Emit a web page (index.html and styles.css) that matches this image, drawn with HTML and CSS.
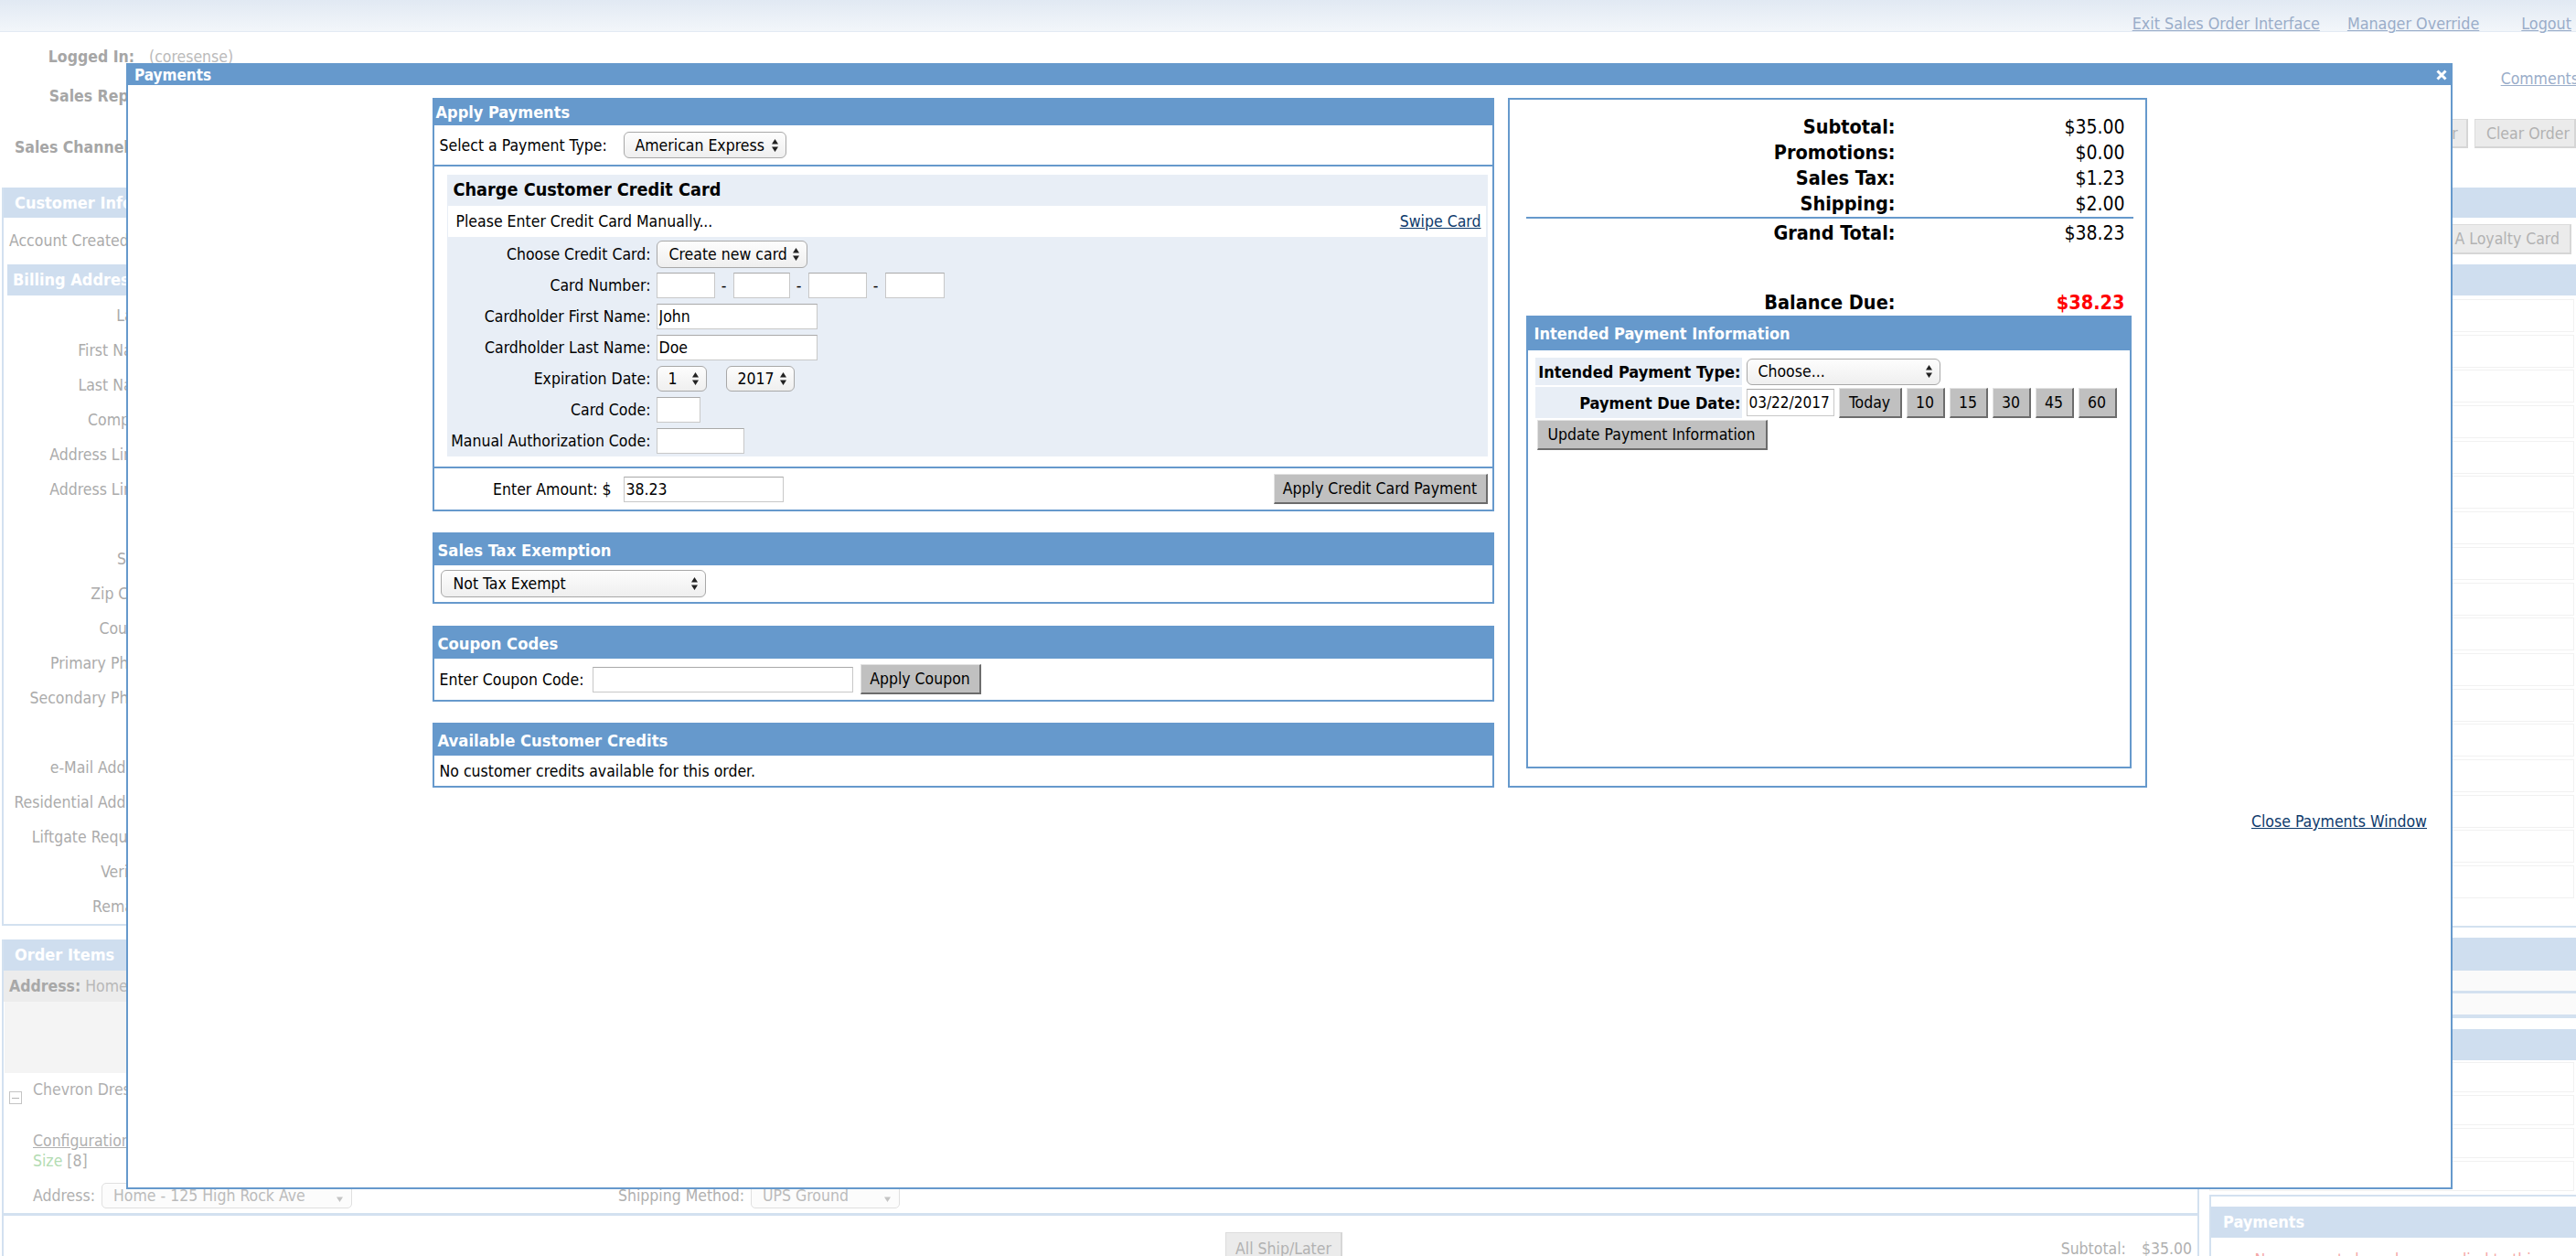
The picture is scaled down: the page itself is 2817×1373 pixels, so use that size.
FILE: index.html
```html
<!DOCTYPE html>
<html lang="en">
<head>
<meta charset="utf-8">
<title>Sales Order - Payments</title>
<link rel="stylesheet" href="styles.css">
</head>
<body>
<div class="page">
  <header class="topbar">
    <nav class="toplinks">
      <a class="toplink">Exit Sales Order Interface</a>
      <a class="toplink mgr">Manager Override</a>
      <a class="toplink logout">Logout</a>
    </nav>
  </header>

  <div class="layout">
    <main class="main">
      <div class="hdr-row logged"><span class="hdr-label">Logged In:</span><span class="hdr-val">(coresense)</span></div>
      <div class="hdr-row rep"><span class="hdr-label">Sales Rep:</span></div>
      <div class="hdr-row chan"><span class="hdr-label">Sales Channel:</span></div>

      <section class="bg-panel cust">
        <div class="bg-band">Customer Information</div>
        <div class="acct">Account Created:</div>
        <div class="bg-band sub">Billing Address</div>
        <div class="fields">
          <div class="field">Label:</div>
          <div class="field">First Name:</div>
          <div class="field">Last Name:</div>
          <div class="field">Company:</div>
          <div class="field">Address Line 1:</div>
          <div class="field">Address Line 2:</div>
          <div class="field">City:</div>
          <div class="field">State:</div>
          <div class="field">Zip Code:</div>
          <div class="field">Country:</div>
          <div class="field">Primary Phone:</div>
          <div class="field">Secondary Phone:</div>
          <div class="field">Fax:</div>
          <div class="field">e-Mail Address:</div>
          <div class="field">Residential Address:</div>
          <div class="field">Liftgate Required:</div>
          <div class="field">Verified:</div>
          <div class="field">Remarks:</div>
        </div>
      </section>

      <section class="bg-panel items">
        <div class="bg-band tall">Order Items</div>
        <div class="addr-bar"><b>Address:</b> Home - 125 High Rock Ave</div>
        <div class="gray-area"></div>
        <div class="item">
          <span class="minus"></span>
          <div class="item-text">
            <div class="item-name">Chevron Dress</div>
            <a class="config">Configuration</a>
            <div class="size"><span class="size-l">Size</span> [8]</div>
          </div>
        </div>
        <div class="addr-row">
          <span class="addr-label">Address:</span>
          <span class="bg-select addr-sel">Home - 125 High Rock Ave<svg class="arr" width="9" height="16" viewBox="0 0 9 16"><path d="M1 9.5H8L4.5 15z" fill="#c4c4c4"/></svg></span>
          <span class="ship-label">Shipping Method:</span>
          <span class="bg-select ship-sel">UPS Ground<svg class="arr" width="9" height="16" viewBox="0 0 9 16"><path d="M1 9.5H8L4.5 15z" fill="#c4c4c4"/></svg></span>
        </div>
        <div class="items-line"></div>
        <div class="totals">
          <span class="bg-btn ship-later">All Ship/Later</span>
          <span class="sub-total"><span>Subtotal:</span><span>$35.00</span></span>
        </div>
      </section>
    </main>

    <aside class="side">
      <div class="s-comments"><a>Comments</a></div>
      <div class="s-btns"><span class="bg-btn save">Save Order</span><span class="bg-btn clear">Clear Order</span></div>
      <div class="s-band first"></div>
      <div class="s-loyal"><span class="bg-btn loyal">Add A Loyalty Card</span></div>
      <div class="s-band mid"></div>
      <div class="s-rows">
        <div class="s-row"></div><div class="s-row"></div><div class="s-row"></div><div class="s-row"></div>
        <div class="s-row"></div><div class="s-row"></div><div class="s-row"></div><div class="s-row"></div>
        <div class="s-row"></div><div class="s-row"></div><div class="s-row"></div><div class="s-row"></div>
        <div class="s-row"></div><div class="s-row"></div><div class="s-row"></div><div class="s-row"></div>
        <div class="s-row"></div>
      </div>
      <div class="s-line"></div>
      <div class="s-band b3"></div>
      <div class="s-sub"></div>
      <div class="s-sep3"></div>
      <div class="s-sub b"></div>
      <div class="s-sep4"></div>
      <div class="s-band b4"></div>
      <div class="s-rows2">
        <div class="s-row2"></div><div class="s-row2"></div><div class="s-row2"></div><div class="s-row2"></div>
      </div>
      <div class="s-pay">
        <div class="s-pay-band">Payments</div>
        <div class="s-warn"><svg width="16" height="15" viewBox="0 0 16 15"><path d="M8 1L15 14H1z" fill="#f3d9b0"/></svg><span>No payments have been applied to this order.</span></div>
      </div>
    </aside>
  </div>

  <div class="modal">
    <div class="modal-title">
      <span class="modal-name">Payments</span>
      <svg class="close" width="12" height="12" viewBox="0 0 12 12"><path d="M1.5 1.5L10.5 10.5M10.5 1.5L1.5 10.5" stroke="#fff" stroke-width="3"/></svg>
    </div>
    <div class="modal-body">
      <div class="pay-grid">
        <div class="col-left">
          <section class="panel apply">
            <h2 class="panel-head short">Apply Payments</h2>
            <div class="pt-row">
              <span class="pt-label">Select a Payment Type:</span>
              <span class="sel sel-pt">American Express<svg class="arr" width="9" height="16" viewBox="0 0 9 16"><path d="M4.5 1L8 6.5H1z M1 9.5H8L4.5 15z" fill="#222"/></svg></span>
            </div>
            <div class="cc-wrap">
              <div class="cc-box">
                <div class="cc-title">Charge Customer Credit Card</div>
                <div class="cc-manual"><span>Please Enter Credit Card Manually...</span><a class="link">Swipe Card</a></div>
                <div class="cc-form">
                  <span class="lbl">Choose Credit Card:</span>
                  <div class="cell"><span class="sel sel-card">Create new card<svg class="arr" width="9" height="16" viewBox="0 0 9 16"><path d="M4.5 1L8 6.5H1z M1 9.5H8L4.5 15z" fill="#222"/></svg></span></div>

                  <span class="lbl">Card Number:</span>
                  <div class="cell"><input class="in cn1" type="text"><span class="dash">-</span><input class="in cn2" type="text"><span class="dash">-</span><input class="in cn1" type="text"><span class="dash">-</span><input class="in cn4" type="text"></div>

                  <span class="lbl">Cardholder First Name:</span>
                  <div class="cell"><input class="in name" type="text" value="John"></div>

                  <span class="lbl">Cardholder Last Name:</span>
                  <div class="cell"><input class="in name" type="text" value="Doe"></div>

                  <span class="lbl">Expiration Date:</span>
                  <div class="cell"><span class="sel sel-m">1<svg class="arr" width="9" height="16" viewBox="0 0 9 16"><path d="M4.5 1L8 6.5H1z M1 9.5H8L4.5 15z" fill="#222"/></svg></span><span class="sel sel-y">2017<svg class="arr" width="9" height="16" viewBox="0 0 9 16"><path d="M4.5 1L8 6.5H1z M1 9.5H8L4.5 15z" fill="#222"/></svg></span></div>

                  <span class="lbl">Card Code:</span>
                  <div class="cell"><input class="in code" type="text"></div>

                  <span class="lbl">Manual Authorization Code:</span>
                  <div class="cell"><input class="in auth" type="text"></div>
                </div>
              </div>
            </div>
            <div class="amount-row">
              <span class="amt-label">Enter Amount: $</span>
              <input class="in amt" type="text" value="38.23">
              <button class="btn apply-cc">Apply Credit Card Payment</button>
            </div>
          </section>

          <section class="panel tax">
            <h2 class="panel-head">Sales Tax Exemption</h2>
            <div class="tax-body">
              <span class="sel sel-tax">Not Tax Exempt<svg class="arr" width="9" height="16" viewBox="0 0 9 16"><path d="M4.5 1L8 6.5H1z M1 9.5H8L4.5 15z" fill="#222"/></svg></span>
            </div>
          </section>

          <section class="panel coupon">
            <h2 class="panel-head">Coupon Codes</h2>
            <div class="coupon-body">
              <span class="cp-label">Enter Coupon Code:</span>
              <input class="in cp" type="text">
              <button class="btn apply-cp">Apply Coupon</button>
            </div>
          </section>

          <section class="panel credits">
            <h2 class="panel-head">Available Customer Credits</h2>
            <div class="credits-body">No customer credits available for this order.</div>
          </section>
        </div>

        <div class="col-right">
          <section class="panel summary">
            <div class="sum-table">
              <span class="s-lbl">Subtotal:</span><span class="s-val">$35.00</span>
              <span class="s-lbl">Promotions:</span><span class="s-val">$0.00</span>
              <span class="s-lbl">Sales Tax:</span><span class="s-val">$1.23</span>
              <span class="s-lbl">Shipping:</span><span class="s-val">$2.00</span>
            </div>
            <div class="sum-line"></div>
            <div class="sum-table grand">
              <span class="s-lbl">Grand Total:</span><span class="s-val">$38.23</span>
            </div>
            <div class="sum-table balance">
              <span class="s-lbl">Balance Due:</span><span class="s-val due">$38.23</span>
            </div>
            <div class="intended">
              <h2 class="panel-head int-head">Intended Payment Information</h2>
              <div class="int-grid">
                <span class="int-lbl">Intended Payment Type:</span>
                <div class="int-cell"><span class="sel sel-int">Choose...<svg class="arr" width="9" height="16" viewBox="0 0 9 16"><path d="M4.5 1L8 6.5H1z M1 9.5H8L4.5 15z" fill="#222"/></svg></span></div>
                <span class="int-lbl tall">Payment Due Date:</span>
                <div class="int-cell date-cell">
                  <input class="in date" type="text" value="03/22/2017">
                  <button class="btn today">Today</button>
                  <button class="btn days">10</button>
                  <button class="btn days">15</button>
                  <button class="btn days">30</button>
                  <button class="btn days">45</button>
                  <button class="btn days">60</button>
                </div>
                <button class="btn update">Update Payment Information</button>
              </div>
            </div>
          </section>
        </div>
      </div>
      <div class="close-row"><a class="link">Close Payments Window</a></div>
    </div>
  </div>
</div>
</body>
</html>
```

FILE: styles.css
```css
* { box-sizing: border-box; }
html, body { margin: 0; padding: 0; }
body {
  width: 2817px;
  height: 1373px;
  overflow: hidden;
  background: #fff;
  font-family: "DejaVu Sans Condensed", "DejaVu Sans", sans-serif;
  font-stretch: condensed;
  font-size: 17.5px;
  color: #000;
}
h2 { margin: 0; }
a { cursor: pointer; }
.page { position: relative; width: 2817px; height: 1373px; overflow: hidden; }

/* ---------- background page (faded) ---------- */
.topbar {
  height: 35px;
  background: linear-gradient(#e1e9f3, #f2f6fa);
  border-bottom: 1px solid #e3eaf3;
  display: flex;
  justify-content: flex-end;
  align-items: flex-start;
  padding: 16px 5px 0 0;
}
.toplinks { display: flex; line-height: 20px; font-size: 17.8px; }
.toplink { color: #9aadc9; text-decoration: underline; }
.toplink.mgr { margin-left: 30px; }
.toplink.logout { margin-left: 46px; }

.layout { display: grid; grid-template-columns: 2405px 401px; column-gap: 11px; }
.main { display: flex; flex-direction: column; }

.hdr-row { display: flex; align-items: center; }
.hdr-label { width: 147px; text-align: right; font-weight: bold; color: #a6a6a6; }
.hdr-val { margin-left: 16px; color: #bababa; }
.logged { height: 54px; }
.rep { height: 32px; }
.chan { height: 80px; }

.bg-panel { margin-left: 2px; border-left: 2px solid #d3e1f0; }
.cust { margin-top: 4px; border-bottom: 2px solid #d3e1f0; }
.bg-band {
  background: #cfdeef;
  color: #fff;
  font-weight: bold;
  font-size: 18px;
  height: 33px;
  line-height: 33px;
  padding-left: 12px;
}
.bg-band.sub { margin-left: 4px; height: 34px; line-height: 34px; padding-left: 6px; }
.bg-band.tall { height: 34px; line-height: 34px; }
.acct { height: 51px; line-height: 51px; padding-left: 6px; color: #ababab; }
.fields { margin-top: 3px; }
.field { width: 171px; height: 38px; line-height: 38px; text-align: right; color: #ababab; white-space: nowrap; }

.items { margin-top: 15px; border-right: 2px solid #d3e1f0; flex: 1; }
.addr-bar { height: 34px; line-height: 34px; background: #ececec; padding-left: 6px; color: #b8b8b8; }
.addr-bar b { color: #a8a8a8; }
.gray-area { height: 78px; background: #f4f4f4; margin-left: 1px; }
.item { height: 117px; display: flex; align-items: flex-start; }
.minus {
  width: 14px; height: 14px;
  margin: 20px 12px 0 6px;
  border: 1px solid #c4c4c4;
  display: flex; align-items: center; justify-content: center;
}
.minus::before { content: ""; width: 8px; height: 1px; background: #b5b5b5; }
.item-text { padding-top: 7px; color: #b0b0b0; line-height: 22px; display: flex; flex-direction: column; align-items: flex-start; }
.item-name { margin-bottom: 34px; }
.config { color: #b0b0b0; text-decoration: underline; }
.size-l { color: #b3dcb3; }
.addr-row { height: 34px; display: flex; align-items: center; color: #b0b0b0; }
.addr-label { width: 107px; padding-left: 32px; }
.bg-select {
  display: inline-flex; align-items: center; justify-content: space-between;
  height: 28px; border: 1px solid #e0e0e0; border-radius: 5px;
  padding: 0 8px 0 12px; color: #bbbbbb; background: #fcfcfc;
}
.addr-sel { width: 274px; }
.ship-label { width: 429px; text-align: right; margin-right: 7px; }
.ship-sel { width: 163px; }
.items-line { height: 3px; background: #d3e1f0; margin-top: 2px; }
.totals { display: flex; align-items: flex-start; padding-top: 18px; }
.bg-btn {
  display: inline-flex; align-items: center; justify-content: center;
  background: #ebebeb; border: 1px solid #dcdcdc; border-bottom: 2px solid #d6d6d6; border-right: 2px solid #d6d6d6;
  color: #b2b2b2; white-space: nowrap;
}
.ship-later { margin-left: 1336px; width: 128px; height: 36px; }
.sub-total { margin-left: auto; display: flex; gap: 17px; line-height: 36px; padding-right: 6px; color: #b0b0b0; }

.side { display: flex; flex-direction: column; }
.s-comments { height: 95px; display: flex; align-items: center; justify-content: flex-end; padding-top: 6px; }
.s-comments a { color: #9aadc9; text-decoration: underline; margin-right: -3px; }
.s-btns { height: 32px; display: flex; justify-content: flex-end; gap: 7px; }
.save { width: 110px; }
.clear { width: 111px; justify-content: flex-start; padding-left: 12px; }
.s-band { background: #cfdeef; height: 33px; }
.s-band.first { margin-top: 43px; }
.s-loyal { margin-top: 7px; height: 33px; display: flex; justify-content: flex-end; padding-right: 5px; }
.loyal { padding: 0 11px 0 12px; }
.s-band.mid { margin-top: 11px; height: 34px; }
.s-rows { margin-top: 4px; }
.s-row { height: 36px; margin: 0 2px 2.7px 0; border: 1px solid #f1f1f1; }
.s-line { margin-top: 27px; height: 2px; background: #d3e1f0; }
.s-band.b3 { margin-top: 11px; height: 36px; }
.s-sub { height: 22px; background: #fafafa; }
.s-sub.b { height: 23px; }
.s-sep3 { height: 3px; background: #d3e1f0; }
.s-sep4 { height: 4px; background: #d3e1f0; }
.s-band.b4 { margin-top: 12px; height: 34px; }
.s-rows2 { margin-top: 2px; }
.s-row2 { height: 33px; margin: 0 2px 3px 0; border: 1px solid #f1f1f1; }
.s-pay { margin-top: 1px; border-top: 2px solid #d3e1f0; border-left: 2px solid #d3e1f0; height: 80px; }
.s-pay-band { margin-top: 11px; height: 34px; line-height: 34px; background: #cfdeef; color: #fff; font-weight: bold; font-size: 18px; padding-left: 13px; }
.s-warn { display: flex; align-items: center; gap: 8px; padding: 14px 0 0 24px; color: #f5a8a8; }

/* ---------- modal ---------- */
.modal {
  position: absolute;
  left: 138px;
  top: 69px;
  width: 2544px;
  height: 1231px;
  border: 2px solid #6699cc;
  background: #fff;
}
.modal-title {
  height: 22px;
  background: #6699cc;
  color: #fff;
  display: flex;
  align-items: center;
  justify-content: space-between;
  padding: 0 4px 0 7px;
}
.modal-name { font-weight: bold; font-size: 17px; }
.modal-body { padding-top: 14px; }

.pay-grid {
  display: grid;
  grid-template-columns: 1161px 699px;
  column-gap: 15px;
  justify-content: center;
}
.col-left { display: flex; flex-direction: column; }
.col-right { display: flex; flex-direction: column; }

.panel { border: 2px solid #6699cc; background: #fff; }
.panel-head {
  background: #6699cc;
  color: #fff;
  font-weight: bold;
  font-size: 18.3px;
  height: 34px;
  line-height: 35px;
  padding-left: 4px;
  white-space: nowrap;
}
.panel-head.short { height: 28px; line-height: 28px; padding-left: 2px; font-size: 18px; }

.sel {
  display: inline-flex;
  align-items: center;
  justify-content: space-between;
  height: 29px;
  border: 1px solid #a8a8a8;
  border-radius: 6px;
  background: linear-gradient(#fdfdfd, #efefef);
  padding: 0 7px 0 12px;
  white-space: nowrap;
}
.arr { flex: none; }
.in {
  font: inherit;
  height: 28px;
  border: 1px solid #c8c8c8;
  border-top-color: #a9a9a9;
  padding: 0 2px;
  background: #fff;
  color: #000;
  outline: none;
}
.btn {
  font: inherit;
  color: #000;
  background: #c0c0c0;
  border-top: 1px solid #e2e2e2;
  border-left: 1px solid #e2e2e2;
  border-right: 2px solid #6c6c6c;
  border-bottom: 2px solid #6c6c6c;
  height: 33px;
  padding: 0;
  white-space: nowrap;
}
.link { color: #0d3a6c; text-decoration: underline; }

/* apply payments */
.pt-row { height: 43px; display: flex; align-items: center; }
.pt-label { width: 207px; padding-left: 6px; white-space: nowrap; }
.sel-pt { width: 178px; }
.cc-wrap { border-top: 2px solid #6699cc; padding: 9px 5px 11px 14px; }
.cc-box { background: #e8eef6; }
.cc-title { height: 34px; line-height: 34px; padding-left: 7px; font-weight: bold; font-size: 19.7px; white-space: nowrap; }
.cc-manual {
  background: #fff;
  margin: 0 2px 0 1px;
  height: 34px;
  display: flex;
  align-items: center;
  justify-content: space-between;
  padding: 0 5px 0 9px;
}
.cc-form {
  margin-top: 2px;
  display: grid;
  grid-template-columns: 223px 1fr;
  column-gap: 6px;
  grid-auto-rows: 34px;
  align-items: center;
}
.lbl { text-align: right; white-space: nowrap; }
.cell { display: flex; align-items: center; }
.sel-card { width: 165px; height: 30px; padding-left: 13px; }
.cn1 { width: 64px; }
.cn2 { width: 62px; }
.cn4 { width: 65px; }
.dash { width: 20px; text-align: center; }
.name { width: 176px; }
.sel-m { width: 55px; height: 28px; }
.sel-y { width: 75px; height: 28px; margin-left: 21px; }
.code { width: 48px; }
.auth { width: 96px; }

.amount-row { border-top: 2px solid #6699cc; height: 47px; display: flex; align-items: center; }
.amt-label { width: 196px; text-align: right; padding-right: 2px; white-space: nowrap; }
.amt { width: 175px; margin-left: 11px; }
.apply-cc { width: 234px; margin-left: auto; margin-right: 5px; }

.tax { margin-top: 23px; }
.tax-body { height: 40px; display: flex; align-items: center; padding-left: 7px; }
.sel-tax { width: 290px; height: 30px; padding-left: 13px; }

.coupon { margin-top: 24px; }
.coupon-body { height: 45px; display: flex; align-items: center; }
.cp-label { width: 173px; padding-left: 6px; white-space: nowrap; }
.cp { width: 285px; }
.apply-cp { width: 132px; margin-left: 8px; }

.credits { margin-top: 23px; }
.credits-body { height: 33px; line-height: 34px; padding-left: 6px; }

/* summary */
.summary { flex: 1; display: flex; flex-direction: column; padding: 16px 13px 0 18px; }
.sum-table { display: grid; grid-template-columns: 404px 1fr; grid-auto-rows: 28px; line-height: 28px; }
.s-lbl { text-align: right; font-weight: bold; font-size: 21.5px; white-space: nowrap; }
.s-val { text-align: right; padding-right: 9px; font-size: 21px; }
.sum-line { height: 2px; background: #6699cc; }
.grand { margin-top: 2px; }
.balance { margin-top: 48px; }
.s-val.due { color: #ff0000; font-weight: bold; font-size: 21.5px; }

.intended { flex: 1; margin: 0 2px 19px 0; border: 2px solid #6699cc; }
.int-head { height: 36px; line-height: 36px; padding-left: 7px; font-size: 18px; }
.int-grid {
  display: grid;
  grid-template-columns: 226px auto;
  justify-content: start;
  column-gap: 5px;
  row-gap: 2px;
  padding: 8px 8px 0 8px;
}
.int-lbl {
  background: #e8eef6;
  height: 30px;
  display: flex;
  align-items: center;
  justify-content: flex-end;
  padding-right: 1px;
  font-weight: bold;
  font-size: 18px;
  white-space: nowrap;
}
.int-lbl.tall { height: 34px; }
.int-cell { display: flex; align-items: center; gap: 5px; }
.sel-int { width: 212px; }
.date { width: 96px; height: 30px; font-size: 17px; }
.today { width: 69px; }
.days { width: 42px; }
.update { grid-column: 1 / -1; justify-self: start; width: 252px; margin-left: 2px; }

.close-row { margin-top: 26px; text-align: right; padding-right: 26px; line-height: 22px; }
```
